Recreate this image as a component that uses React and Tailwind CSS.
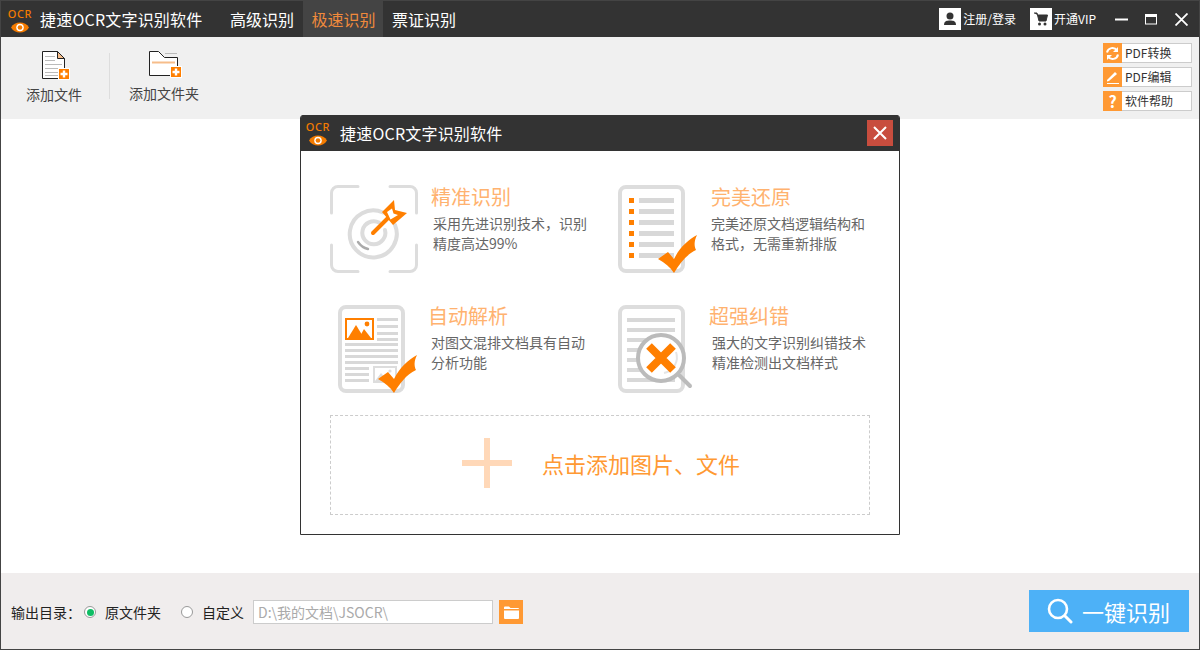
import React from "react";

const FONT = "font-['Microsoft_YaHei','Noto_Sans_CJK_SC','Noto_Sans',sans-serif]";

function Logo() {
  return (
    <div className="flex flex-col items-center w-[24px]">
      <span className="text-[11px] leading-[11px] text-[#f47b00] font-medium font-['Noto_Sans',sans-serif] tracking-[0.6px]">OCR</span>
      <svg width="18" height="11" viewBox="0 0 20 12" className="mt-[3px]">
        <path d="M0 6 C4 -1.5 16 -1.5 20 6 C16 13.5 4 13.5 0 6Z" fill="#f47b00" />
        <circle cx="10" cy="6" r="4.2" fill="#fff" />
        <circle cx="10" cy="6" r="2.6" fill="#f47b00" />
      </svg>
    </div>
  );
}

function PlusBadge({ x, y }) {
  return (
    <g>
      <rect x={x - 1} y={y - 1} width="12" height="12" fill="#fff" />
      <rect x={x} y={y} width="10" height="10" fill="#ff7f00" />
      <path d={`M${x + 5} ${y + 1.5}V${y + 8.5}M${x + 1.5} ${y + 5}H${x + 8.5}`} stroke="#fff" strokeWidth="2.4" />
    </g>
  );
}

function FileAddIcon() {
  return (
    <svg width="28" height="30" viewBox="0 0 28 30" className="block">
      <path d="M0.5 0.5H15.5L22.5 7.5V27.5H0.5Z" fill="#fff" stroke="#222" />
      <path d="M15.5 0.5V7.5H22.5Z" fill="#f6bd8a" stroke="#222" />
      <path d="M3 5.5H13M3 9.5H13M3 13.5H20M3 17.5H20M3 21.5H16M3 24.5H16" stroke="#bbb" strokeWidth="1" />
      <PlusBadge x={17} y={18} />
    </svg>
  );
}

function FolderAddIcon() {
  return (
    <svg width="33" height="28" viewBox="0 0 33 28" className="block">
      <path d="M16 2.5H28" stroke="#bbb" />
      <path d="M0.5 0.5H9.5L15.5 6.5H28.5V24.5H0.5Z" fill="#fff" stroke="#222" />
      <path d="M3 11.5H26" stroke="#f6bd8a" strokeWidth="2" />
      <PlusBadge x={22} y={16} />
    </svg>
  );
}

function Check() {
  return (
    <path
      d="M40 74 L50 67 L56 74 C62 62 70 55 79 50 C76 56 76 61 78 65 C68 70 62 78 56 88 C52 82 47 78 40 74Z"
      fill="#ff7f00"
    />
  );
}

function TargetIcon() {
  return (
    <svg width="88" height="88" viewBox="0 0 88 88" className="block shrink-0">
      <g fill="none" stroke="#ddd" strokeWidth="3" strokeLinecap="round">
        <path d="M28 1.5H8A6.5 6.5 0 0 0 1.5 8V28" />
        <path d="M60 1.5H80A6.5 6.5 0 0 1 86.5 8V28" />
        <path d="M1.5 60V80A6.5 6.5 0 0 0 8 86.5H28" />
        <path d="M86.5 60V80A6.5 6.5 0 0 1 80 86.5H60" />
      </g>
      <g fill="none" stroke="#dcdcdc" strokeWidth="4" strokeLinecap="round">
        <path d="M53 27.5A23.5 23.5 0 1 0 65 40" />
        <path d="M49 37.5A11.5 11.5 0 1 0 55 45" />
      </g>
      <path d="M28 57A17 17 0 0 0 38 64" stroke="#aaa" strokeWidth="2.4" fill="none" strokeLinecap="round" />
      <path d="M43 48L58 33" stroke="#ff7f00" strokeWidth="4" strokeLinecap="round" />
      <path d="M64 15 L65 25 L77 28 L63 40 L52 27Z" fill="#ff7f00" />
      <path d="M57 27L62 23.5L63.5 28.5L68 30L60.5 34.5Z" fill="#fff" />
    </svg>
  );
}

function DocFrame({ children }) {
  return (
    <svg width="80" height="88" viewBox="0 0 80 88" className="block shrink-0">
      <rect x="2" y="2" width="63" height="84" rx="6" fill="#fff" stroke="#ddd" strokeWidth="4" />
      {children}
    </svg>
  );
}

function ListDocIcon() {
  const ys = [13, 24, 35, 46, 57, 68];
  return (
    <DocFrame>
      {ys.map((y) => (
        <g key={y}>
          <rect x="11" y={y} width="5" height="5" fill="#ff7f00" />
          <rect x="21" y={y} width="35" height="5" fill="#d8d8d8" />
        </g>
      ))}
      <Check />
    </DocFrame>
  );
}

function ImageDocIcon() {
  return (
    <DocFrame>
      <rect x="8" y="14" width="27" height="20" fill="#fff" stroke="#ff7f00" strokeWidth="2" />
      <path d="M10 33L18 20L26 33Z" fill="#ff7f00" />
      <path d="M21 33L26 24L33 33Z" fill="#ff7f00" />
      <circle cx="29" cy="19" r="2.4" fill="#ff7f00" />
      {[13, 20, 27, 33].map((y) => (
        <rect key={y} x="39" y={y} width="21" height="3" fill="#d8d8d8" />
      ))}
      {[38, 44, 50, 56].map((y) => (
        <rect key={y} x="7" y={y} width="53" height="3" fill="#d8d8d8" />
      ))}
      {[62, 68, 74].map((y) => (
        <rect key={y} x="7" y={y} width="24" height="3" fill="#d8d8d8" />
      ))}
      <rect x="36" y="62" width="22" height="15" fill="#fff" stroke="#ddd" strokeWidth="2" />
      <path d="M37 76L43 68L50 76Z" fill="#ddd" />
      <circle cx="52" cy="66" r="1.6" fill="#ddd" />
      <Check />
    </DocFrame>
  );
}

function SearchDocIcon() {
  return (
    <DocFrame>
      {[13, 23, 33, 43, 53, 63, 73].map((y) => (
        <rect key={y} x="9" y={y} width="48" height="4" fill="#d8d8d8" />
      ))}
      <path d="M61 70L72 81" stroke="#bbb" strokeWidth="4" strokeLinecap="round" />
      <circle cx="43" cy="53" r="23" fill="#fff" stroke="#bbb" strokeWidth="4" />
      <path d="M58 47A16 16 0 0 1 46 68" stroke="#e5e5e5" strokeWidth="2" fill="none" />
      <path d="M31 41L55 65M55 41L31 65" stroke="#ff7f00" strokeWidth="8" />
    </DocFrame>
  );
}

function Feature({ icon, title, lines, wrap, text, top, desc }) {
  return (
    <div className={`flex items-start ${wrap}`}>
      {icon}
      <div className={`flex flex-col ${text} ${top}`}>
        <div className="text-[20px] leading-[24px] text-[#ffb26f] whitespace-nowrap">{title}</div>
        <div className={`mt-[4px] text-[14px] leading-[20px] text-[#666] whitespace-nowrap ${desc}`}>
          {lines.map((l) => (
            <div key={l}>{l}</div>
          ))}
        </div>
      </div>
    </div>
  );
}

function SideButton({ icon, label }) {
  return (
    <div className="flex items-center w-[89px] h-[20px] bg-white border border-[#ccc] box-border">
      <div className="w-[19px] h-[20px] -my-px -ml-px bg-[#ff9933] flex items-center justify-center shrink-0">{icon}</div>
      <span className="ml-[3px] text-[12px] leading-none text-[#333] whitespace-nowrap">{label}</span>
    </div>
  );
}

export default function App() {
  return (
    <div className={`relative w-[1200px] h-[650px] flex flex-col bg-white border border-[#444] box-border overflow-hidden ${FONT}`}>
      {/* title bar */}
      <div className="h-[36px] shrink-0 bg-[#333] flex items-center text-white">
        <div className="ml-[7px] mr-[8px] mt-[3px]"><Logo /></div>
        <span className="text-[16px] whitespace-nowrap tracking-[0.2px]">捷速OCR文字识别软件</span>
        <div className="ml-[20px] flex h-full text-[16px]">
          <div className="w-[81px] pr-[2px] flex items-center justify-center">高级识别</div>
          <div className="w-[80px] flex items-center justify-center bg-[#444] text-[#f08a3c]">极速识别</div>
          <div className="w-[81px] flex items-center justify-center">票证识别</div>
        </div>
        <div className="ml-auto flex items-center">
          <div className="w-[22px] h-[22px] bg-white flex items-center justify-center">
            <svg width="14" height="14" viewBox="0 0 14 14"><circle cx="7" cy="4" r="3.5" fill="#333" /><path d="M1 13C1 9 4 8.5 7 8.5S13 9 13 13Z" fill="#333" /></svg>
          </div>
          <span className="ml-[2px] text-[12px] whitespace-nowrap">注册/登录</span>
          <div className="ml-[14px] w-[22px] h-[22px] bg-white flex items-center justify-center">
            <svg width="14" height="14" viewBox="0 0 14 14"><path d="M0 1H3L5 9H12L13.5 3H3.5" fill="#333" stroke="#333" /><circle cx="5.5" cy="12" r="1.5" fill="#333" /><circle cx="11" cy="12" r="1.5" fill="#333" /></svg>
          </div>
          <span className="ml-[2px] text-[12px] whitespace-nowrap">开通VIP</span>
          <svg width="13" height="13" viewBox="0 0 13 13" className="ml-[19px]"><path d="M0 6.5H13" stroke="#fff" strokeWidth="2" /></svg>
          <svg width="13" height="11" viewBox="0 0 13 11" className="ml-[17px]"><rect x="0.5" y="0.5" width="11" height="9.5" fill="none" stroke="#fff" /><rect x="0" y="0" width="12" height="3" fill="#fff" /></svg>
          <svg width="13" height="13" viewBox="0 0 13 13" className="ml-[17px] mr-[11px]"><path d="M0.5 0.5L12.5 12.5M12.5 0.5L0.5 12.5" stroke="#fff" strokeWidth="1.8" /></svg>
        </div>
      </div>

      {/* toolbar */}
      <div className="h-[82px] shrink-0 bg-[#f0f0f0] flex relative">
        <div className="ml-[25px] w-[56px] flex flex-col items-center pt-[14px]">
          <div className="pl-[4px]"><FileAddIcon /></div>
          <span className="mt-[3px] text-[14px] leading-[20px] text-[#444] whitespace-nowrap">添加文件</span>
        </div>
        <div className="ml-[27px] mt-[16px] w-px h-[46px] bg-[#ddd]" />
        <div className="ml-[19px] w-[70px] flex flex-col items-center pt-[14px]">
          <div className="pl-[2px]"><FolderAddIcon /></div>
          <span className="mt-[4px] text-[14px] leading-[20px] text-[#444] whitespace-nowrap">添加文件夹</span>
        </div>
        <div className="ml-auto mr-[7px] mt-[6px] flex flex-col gap-[4px]">
          <SideButton
            label="PDF转换"
            icon={<svg width="15" height="15" viewBox="0 0 15 15" fill="none" stroke="#fff" strokeWidth="2"><path d="M2 6.5A5.5 5.5 0 0 1 12 4.5" /><path d="M13 8.5A5.5 5.5 0 0 1 3 10.5" /><path d="M13 1V6H8Z" fill="#fff" stroke="none" /><path d="M2 14V9H7Z" fill="#fff" stroke="none" /></svg>}
          />
          <SideButton
            label="PDF编辑"
            icon={<svg width="14" height="14" viewBox="0 0 14 14"><path d="M1 10L9 2L11 4L3 11L1 11.5Z" fill="#fff" /><path d="M1 13.5H13" stroke="#fff" strokeWidth="1" /></svg>}
          />
          <SideButton label="软件帮助" icon={<span className="text-white text-[16px] font-bold leading-none">?</span>} />
        </div>
      </div>

      {/* main area */}
      <div className="flex-1 bg-white" />

      {/* footer */}
      <div className="h-[76px] shrink-0 bg-[#f0eded] flex text-[14px] text-[#222]">
        <div className="flex items-center h-[24px] mt-[27px] ml-[10px]">
          <span className="whitespace-nowrap w-[73px]">输出目录：</span>
          <div className="w-[12px] h-[12px] rounded-full border border-[#999] bg-white flex items-center justify-center">
            <div className="w-[7px] h-[7px] rounded-full bg-[#0fbd64]" />
          </div>
          <span className="ml-[9px] whitespace-nowrap">原文件夹</span>
          <div className="ml-[20px] w-[12px] h-[12px] rounded-full border border-[#999] bg-white" />
          <span className="ml-[9px] whitespace-nowrap">自定义</span>
          <div className="ml-[9px] w-[240px] h-[24px] bg-white border border-[#ccc] flex items-center pl-[4px] text-[14px] text-[#aaa] whitespace-nowrap">D:\我的文档\JSOCR\</div>
          <div className="ml-[6px] w-[24px] h-[24px] bg-[#ff9933] flex items-center justify-center">
            <svg width="15" height="13" viewBox="0 0 15 13"><path d="M0 3V1.5A1 1 0 0 1 1 .5H5L6.5 2H14A1 1 0 0 1 15 3Z" fill="#fff" /><path d="M0 4.5H15V12A1 1 0 0 1 14 13H1A1 1 0 0 1 0 12Z" fill="#fff" /></svg>
          </div>
        </div>
        <div className="ml-auto mr-[10px] mt-[17px] w-[160px] h-[42px] bg-[#4db1f7] flex items-center text-white">
          <svg width="26" height="26" viewBox="0 0 26 26" fill="none" stroke="#fff" className="ml-[18px] shrink-0"><circle cx="11" cy="11" r="9" strokeWidth="2.6" /><path d="M18 18L24 24" strokeWidth="3" strokeLinecap="round" /></svg>
          <span className="ml-[9px] text-[22px] leading-none whitespace-nowrap">一键识别</span>
        </div>
      </div>

      {/* dialog overlay */}
      <div className="absolute left-[299px] top-[114px] w-[600px] h-[420px] bg-white border border-[#333] rounded-t-[3px] flex flex-col box-border">
        <div className="h-[36px] -mt-px shrink-0 bg-[#333] rounded-t-[3px] flex items-center text-white">
          <div className="ml-[5px] mr-[10px]"><Logo /></div>
          <span className="text-[16px] whitespace-nowrap tracking-[0.2px]">捷速OCR文字识别软件</span>
          <div className="ml-auto mr-[6px] w-[26px] h-[26px] bg-[#c84d3e] flex items-center justify-center">
            <svg width="14" height="14" viewBox="0 0 14 14"><path d="M1 1L13 13M13 1L1 13" stroke="#fff" strokeWidth="2" /></svg>
          </div>
        </div>
        <div className="pl-[29px] pt-[34px] grid grid-cols-[288px_260px] grid-rows-[88px_88px] gap-y-[32px]">
          <Feature icon={<TargetIcon />} title="精准识别" lines={["采用先进识别技术，识别", "精度高达99%"]} wrap="" text="ml-[13px]" top="" desc="ml-[2px]" />
          <Feature icon={<ListDocIcon />} title="完美还原" lines={["完美还原文档逻辑结构和", "格式，无需重新排版"]} wrap="" text="ml-[13px]" top="" desc="ml-0" />
          <Feature icon={<ImageDocIcon />} title="自动解析" lines={["对图文混排文档具有自动", "分析功能"]} wrap="ml-[8px]" text="ml-[10px]" top="-mt-px" desc="ml-[3px]" />
          <Feature icon={<SearchDocIcon />} title="超强纠错" lines={["强大的文字识别纠错技术", "精准检测出文档样式"]} wrap="" text="ml-[11px]" top="-mt-px" desc="ml-[3px]" />
        </div>
        <div className="mt-[22px] ml-[29px] w-[540px] h-[100px] border border-dashed border-[#ccc] flex items-center pl-[131px]">
          <svg width="50" height="50" viewBox="0 0 50 50" className="shrink-0 mb-[4px]"><path d="M25 0V50M0 25H50" stroke="#ffd8b8" strokeWidth="6" /></svg>
          <span className="ml-[30px] mb-[4px] text-[22px] text-[#ff9933] whitespace-nowrap">点击添加图片、文件</span>
        </div>
      </div>
    </div>
  );
}
